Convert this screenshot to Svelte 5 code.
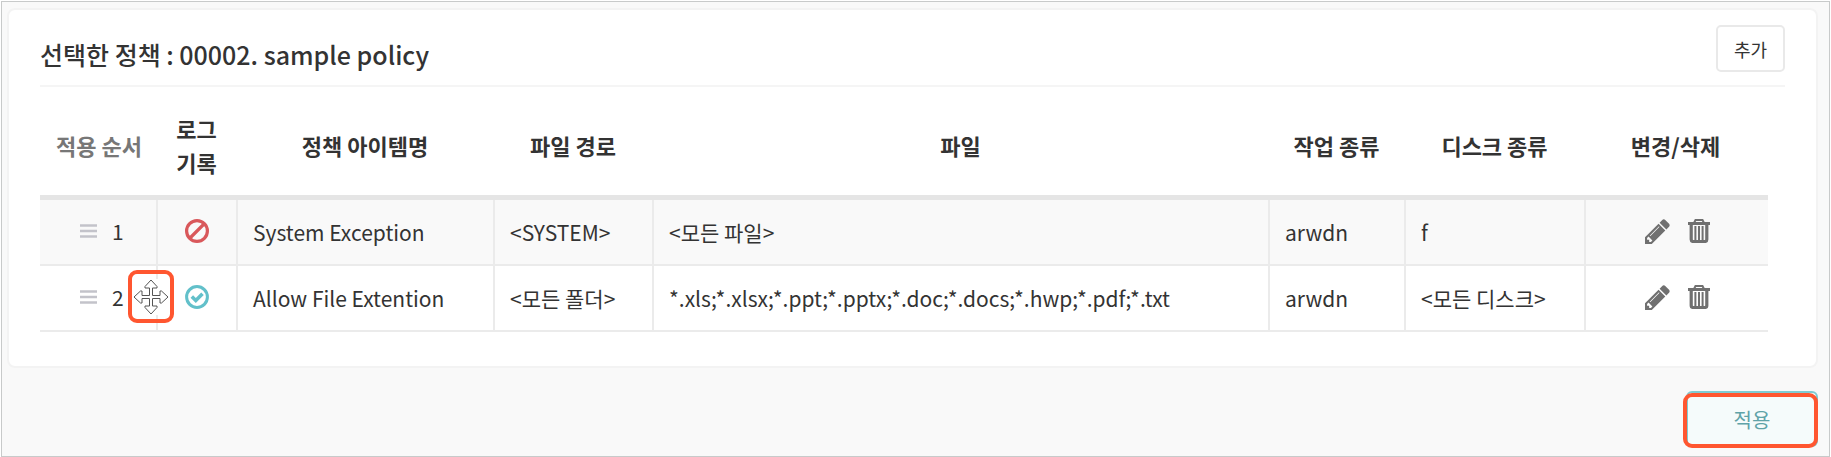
<script>
	const columns = [
		{ name: '적용 순서', cls: 'col-order' },
		{ name: '로그 기록', cls: 'col-log' },
		{ name: '정책 아이템명', cls: 'col-name' },
		{ name: '파일 경로', cls: 'col-path' },
		{ name: '파일', cls: 'col-file' },
		{ name: '작업 종류', cls: 'col-action' },
		{ name: '디스크 종류', cls: 'col-disk' },
		{ name: '변경/삭제', cls: 'col-edit' }
	];

	let items = $state([
		{ name: 'System Exception', log: false, path: '<SYSTEM>', file: '<모든 파일>', action: 'arwdn', disk: 'f' },
		{ name: 'Allow File Extention', log: true, path: '<모든 폴더>', file: '*.xls;*.xlsx;*.ppt;*.pptx;*.doc;*.docs;*.hwp;*.pdf;*.txt', action: 'arwdn', disk: '<모든 디스크>' }
	]);

	// row that is being moved
	let activeRow = $state(1);
</script>

<main>
	<section class="card">
		<header>
			<h1>선택한 정책 : 00002. sample policy</h1>
			<button class="add" type="button">추가</button>
		</header>

		<table>
			<colgroup>
				{#each columns as col}
					<col class={col.cls} />
				{/each}
			</colgroup>
			<thead>
				<tr>
					{#each columns as col}
						<th class={col.cls} scope="col">{col.name}</th>
					{/each}
				</tr>
			</thead>
			<tbody>
				{#each items as item, idx}
					<tr>
						<td class="order">
							<div class="handle">
								<svg width="17" height="14" viewBox="0 0 17 14" aria-hidden="true">
									<path d="M0 1.5h17M0 7h17M0 12.5h17" stroke="#c3c3ca" stroke-width="2.6" />
								</svg>
								<span>{idx + 1}</span>
							</div>
							{#if idx === activeRow}
								<div class="move">
									<svg width="36" height="36" viewBox="0 0 36 36" aria-hidden="true">
										<path d="M18 1l6 6.5v1.5h-4.500v7.500h7.500v-4.500h1.500l6.500 6-6.500 6h-1.500v-4.500h-7.500v7.500h4.500v1.500l-6 6.500-6-6.500v-1.500h4.500v-7.500h-7.500v4.500h-1.500l-6.500-6 6.500-6h1.500v4.500h7.500v-7.500h-4.500v-1.500z" fill="#fff" stroke="#555" stroke-width="1" />
									</svg>
								</div>
							{/if}
						</td>
						<td class="icon">
							{#if item.log}
								<svg width="24" height="24" viewBox="0 0 24 24" role="img" aria-label="기록">
									<circle cx="12" cy="12" r="10.4" fill="none" stroke="#62c0ca" stroke-width="3" />
									<path d="M6.800 11.500l4 4 6.700-6.700" fill="none" stroke="#62c0ca" stroke-width="3.6" />
								</svg>
							{:else}
								<svg width="24" height="24" viewBox="0 0 24 24" role="img" aria-label="기록 안 함">
									<circle cx="12" cy="12" r="10.4" fill="none" stroke="#d9585b" stroke-width="3.2" />
									<path d="M5 19L19 5" stroke="#d9585b" stroke-width="3.2" />
								</svg>
							{/if}
						</td>
						<td>{item.name}</td>
						<td>{item.path}</td>
						<td>{item.file}</td>
						<td>{item.action}</td>
						<td>{item.disk}</td>
						<td class="icon">
							<div class="tools">
								<button type="button" aria-label="변경">
									<svg width="25" height="25" viewBox="128 128 1536 1536" fill="#707070">
										<path d="M491 1536l91-91-235-235-91 91v107h128v128h107zm523-928q0-22-22-22-10 0-17 7l-542 542q-7 7-7 17 0 22 22 22 10 0 17-7l542-542q7-7 7-17zm-54-192l416 416-832 832h-416v-416zm683 96q0 53-37 90l-166 166-416-416 166-165q36-38 90-38 53 0 91 38l235 234q37 39 37 91z" />
									</svg>
								</button>
								<button type="button" aria-label="삭제">
									<svg width="22" height="24" viewBox="0 0 22 24" fill="none" stroke="#707070">
										<path d="M0 4.500h22" stroke-width="3" />
										<path d="M6 4l1.500-3h7l1.500 3" stroke-width="2" />
										<path d="M3.200 5v15.500q0 2 2 2h11.600q2 0 2-2V5" stroke-width="3.200" />
										<path d="M7.400 7v15M11 7v15M14.600 7v15" stroke-width="2" />
									</svg>
								</button>
							</div>
						</td>
					</tr>
				{/each}
			</tbody>
		</table>
	</section>

	<footer>
		<div class="apply-wrap">
			<button class="apply" type="button">적용</button>
		</div>
	</footer>
</main>

<style>
	:global(body) {
		background: #fff;
	}

	main {
		margin: 1px;
		padding: 6px 11px 9px 5px;
		border: 1px solid #c8caca;
		background: #f9f9f9;
		color: #333;
		font-family: 'Noto Sans CJK KR', sans-serif;
		font-size: 21px;
	}

	button {
		font-family: inherit;
		color: inherit;
		cursor: pointer;
	}

	.card {
		padding: 15px 31px 34px;
		border: 2px solid #f3f3f3;
		border-radius: 8px;
		background: #fff;
	}

	header {
		display: flex;
		justify-content: space-between;
		align-items: flex-start;
		padding-bottom: 12px;
		border-bottom: 2px solid #f5f5f5;
	}

	h1 {
		margin: 10px 0 0;
		font-size: 25px;
		font-weight: 500;
		line-height: 38px;
	}

	.add {
		width: 69px;
		height: 47px;
		padding: 0;
		border: 2px solid #e9e9e9;
		border-radius: 5px;
		background: #fff;
		font-size: 18px;
	}

	table {
		width: calc(100% - 17px);
		margin-top: 20px;
		table-layout: fixed;
		border-collapse: separate;
		border-spacing: 0;
	}

	col.col-order { width: 118px; }
	col.col-log { width: 80px; }
	col.col-name { width: 257px; }
	col.col-path { width: 159px; }
	col.col-action { width: 136px; }
	col.col-disk { width: 180px; }
	col.col-edit { width: 182px; }

	th {
		height: 68px;
		padding: 4px 17px 16px 14px;
		border-bottom: 5px solid #e5e5e5;
		font-size: 22px;
		font-weight: 700;
		line-height: 34px;
		vertical-align: middle;
	}

	th.col-order {
		padding-left: 0;
		padding-right: 0;
		color: #777;
	}

	td {
		box-sizing: border-box;
		height: 66px;
		padding: 0 15px;
		border-right: 2px solid #ebebeb;
		border-bottom: 2px solid #ebebeb;
		line-height: 30px;
		white-space: nowrap;
	}

	td:last-child {
		border-right: none;
	}

	tbody tr:nth-child(odd) {
		background: #f9f9f9;
	}

	td.order {
		position: relative;
		padding: 0 0 2px 40px;
	}

	td.icon {
		padding: 0 0 2px;
	}

	td svg {
		display: block;
		margin: 0 auto;
	}

	.handle {
		display: flex;
		align-items: center;
		gap: 15px;
	}

	.handle svg {
		margin: 0;
	}

	/* move cursor with its highlight frame */
	.move {
		position: absolute;
		z-index: 1;
		top: 4px;
		right: -18px;
		box-sizing: border-box;
		width: 46px;
		height: 53px;
		display: flex;
		align-items: center;
		justify-content: center;
		border: 4px solid #ff5630;
		border-radius: 9px;
	}

	.move svg {
		background: #fff;
	}

	.tools {
		display: flex;
		justify-content: center;
		gap: 18px;
	}

	.tools button {
		display: flex;
		padding: 0;
		border: none;
		background: none;
	}

	footer {
		display: flex;
		justify-content: flex-end;
		padding-top: 23px;
	}

	.apply-wrap {
		position: relative;
	}

	.apply-wrap::after {
		content: '';
		position: absolute;
		inset: 2px 0 -1px -3px;
		border: 4px solid #ff5630;
		border-radius: 9px;
		pointer-events: none;
	}

	.apply {
		display: block;
		width: 132px;
		height: 56px;
		padding: 0;
		border: 2px solid #7fcbd2;
		border-radius: 6px;
		background: #f5fbfb;
		color: #5fa3a8;
		font-size: 20px;
	}
</style>
